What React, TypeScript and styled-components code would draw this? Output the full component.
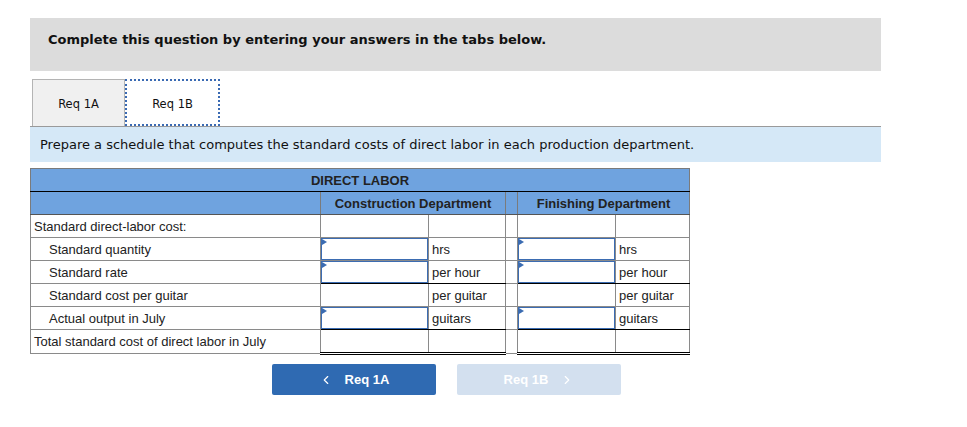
import React from 'react'
import styled, { createGlobalStyle } from 'styled-components'
import { ChevronLeft, ChevronRight } from 'lucide-react'

const GlobalStyle = createGlobalStyle`
  body {
    margin: 0;
    background: #fff;
    font-family: 'Liberation Sans', Arial, sans-serif;
  }
`

const Page = styled.div`
  width: 851px;
  padding: 18px 0 0 30px;
`

const Banner = styled.div`
  height: 53px;
  box-sizing: border-box;
  background: #dcdcdc;
  padding: 14px 0 0 18px;
  font-family: 'DejaVu Sans', Verdana, sans-serif;
  font-weight: bold;
  font-size: 13px;
  line-height: 16px;
  color: #111;
`

const TabStrip = styled.div`
  margin-top: 8px;
  display: flex;
  padding-left: 2px;
  border-bottom: 1px solid #9a9a9a;
`

const Tab = styled.div<{ $active?: boolean }>`
  height: 47px;
  box-sizing: border-box;
  display: flex;
  align-items: center;
  justify-content: center;
  padding-top: 2px;
  font-family: 'DejaVu Sans', Verdana, sans-serif;
  font-size: 11.5px;
  color: #111;
  background: ${(p) => (p.$active ? '#fff' : '#f0f0f0')};
  border: ${(p) => (p.$active ? '2px dotted #3a6ab3' : '1px solid #b4b4b4')};
  border-bottom: ${(p) => (p.$active ? '2px dotted #3a6ab3' : 'none')};
  margin-bottom: ${(p) => (p.$active ? '-1px' : '0')};
  width: ${(p) => (p.$active ? '95px' : '93px')};
`

const Instruction = styled.div`
  height: 35px;
  background: #d5e8f7;
  display: flex;
  align-items: center;
  padding-left: 10px;
  font-family: 'DejaVu Sans', Verdana, sans-serif;
  font-size: 13px;
  color: #111;
`

const Table = styled.table`
  margin-top: 6px;
  border-collapse: collapse;
  border: 1px solid #7b7b7b;
  font-size: 13px;
  color: #222;
  table-layout: fixed;
  width: 659px;
`

const HeadCell = styled.th<{ $line?: string }>`
  height: 22px;
  padding: 0;
  background: #6fa3df;
  font-weight: bold;
  font-size: 13px;
  color: #222;
  text-align: center;
  border-left: 1px solid #7b7b7b;
  border-bottom: 1px solid ${(p) => p.$line || '#555'};
`

const Cell = styled.td<{ $indent?: boolean; $bottom?: string }>`
  height: 22px;
  padding: 0 0 0 ${(p) => (p.$indent ? '18px' : '3px')};
  border: 1px solid #8a8a8a;
  ${(p) => (p.$bottom ? `border-bottom: ${p.$bottom};` : '')}
  white-space: nowrap;
  position: relative;
`

const InputBox = styled.div`
  position: absolute;
  inset: 0;
  border: 1.5px solid #3b6cb2;
  background: #fff;
  &::before {
    content: '';
    position: absolute;
    left: 0;
    top: 0;
    border-top: 3px solid transparent;
    border-bottom: 3px solid transparent;
    border-left: 5px solid #3b6cb2;
  }
`

const Buttons = styled.div`
  display: flex;
  gap: 21px;
  margin: 9px 0 0 242px;
`

const NavButton = styled.div<{ $disabled?: boolean }>`
  width: 164px;
  height: 31px;
  border-radius: 2px;
  background: ${(p) => (p.$disabled ? '#d3e0ef' : '#2f6ab2')};
  color: #fff;
  font-weight: bold;
  font-size: 13px;
  display: flex;
  align-items: center;
  justify-content: center;
  gap: 12px;
`

type Row = {
  label: string
  indent?: boolean
  input?: boolean
  unit?: string
  under?: 'single' | 'double'
}

const rows: Row[] = [
  { label: 'Standard direct-labor cost:' },
  { label: 'Standard quantity', indent: true, input: true, unit: 'hrs' },
  { label: 'Standard rate', indent: true, input: true, unit: 'per hour', under: 'single' },
  { label: 'Standard cost per guitar', indent: true, unit: 'per guitar' },
  { label: 'Actual output in July', indent: true, input: true, unit: 'guitars', under: 'single' },
  { label: 'Total standard cost of direct labor in July', under: 'double' },
]

const underline = (u?: 'single' | 'double') =>
  u === 'single' ? '1px solid #000' : u === 'double' ? '3px double #000' : undefined

const App = () => {
  return (
    <Page>
      <GlobalStyle />
      <Banner>Complete this question by entering your answers in the tabs below.</Banner>
      <TabStrip>
        <Tab>Req 1A</Tab>
        <Tab $active>Req 1B</Tab>
      </TabStrip>
      <Instruction>
        Prepare a schedule that computes the standard costs of direct labor in each production department.
      </Instruction>
      <Table>
        <colgroup>
          <col style={{ width: 290 }} />
          <col style={{ width: 108 }} />
          <col style={{ width: 77 }} />
          <col style={{ width: 12 }} />
          <col style={{ width: 98 }} />
          <col style={{ width: 74 }} />
        </colgroup>
        <thead>
          <tr>
            <HeadCell colSpan={6} $line="#000">DIRECT LABOR</HeadCell>
          </tr>
          <tr>
            <HeadCell />
            <HeadCell colSpan={2}>Construction Department</HeadCell>
            <HeadCell />
            <HeadCell colSpan={2}>Finishing Department</HeadCell>
          </tr>
        </thead>
        <tbody>
          {rows.map((r) => (
            <tr key={r.label}>
              <Cell $indent={r.indent}>{r.label}</Cell>
              <Cell $bottom={underline(r.under)}>{r.input && <InputBox />}</Cell>
              <Cell $bottom={underline(r.under)}>{r.unit}</Cell>
              <Cell />
              <Cell $bottom={underline(r.under)}>{r.input && <InputBox />}</Cell>
              <Cell $bottom={underline(r.under)}>{r.unit}</Cell>
            </tr>
          ))}
        </tbody>
      </Table>
      <Buttons>
        <NavButton>
          <ChevronLeft size={14} strokeWidth={2} />
          Req 1A
        </NavButton>
        <NavButton $disabled>
          Req 1B
          <ChevronRight size={14} strokeWidth={2} />
        </NavButton>
      </Buttons>
    </Page>
  )
}

export default App
